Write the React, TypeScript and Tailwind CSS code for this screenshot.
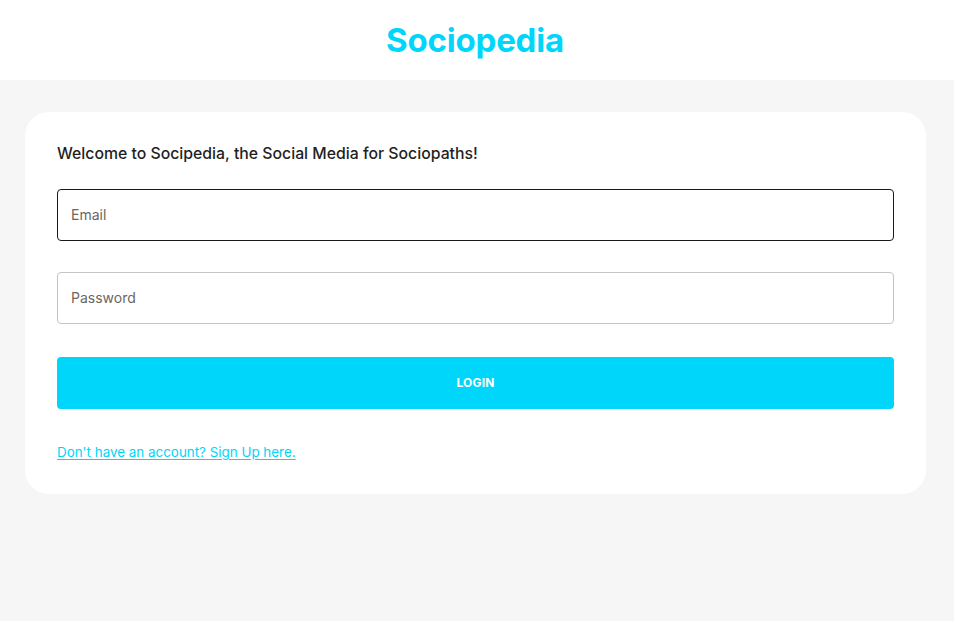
import React, { useState } from 'react';

const font = { fontFamily: 'Inter, "Open Sans", sans-serif' };

const App: React.FC = () => {
  const [email, setEmail] = useState('');
  const [password, setPassword] = useState('');

  return (
    <div className="min-h-[621px] bg-[#f6f6f6]" style={font}>
      <header className="flex h-[80px] items-center justify-center bg-white">
        <h1 className="ml-[-4px] text-[33px] font-bold leading-none tracking-[-0.2px] text-[#00d5fa]">
          Sociopedia
        </h1>
      </header>

      <div className="ml-[25px] mt-[32px] w-[901px] rounded-[24px] bg-white p-[32px]">
        <h2 className="text-[15.8px] font-medium leading-[20px] text-[#1f1f1f]">
          Welcome to Socipedia, the Social Media for Sociopaths!
        </h2>

        <form className="mt-[25px] flex flex-col" onSubmit={(e) => e.preventDefault()}>
          <input
            type="email"
            placeholder="Email"
            value={email}
            onChange={(e) => setEmail(e.target.value)}
            className="h-[52px] w-full rounded-[4px] border border-[#1a1a1a] px-[13px] pb-[2px] text-[14px] text-[#333] outline-none placeholder:text-[#6b6660]"
          />
          <input
            type="password"
            placeholder="Password"
            value={password}
            onChange={(e) => setPassword(e.target.value)}
            className="mt-[31px] h-[52px] w-full rounded-[4px] border border-[#c4c4c4] px-[13px] pb-[2px] text-[14px] text-[#333] outline-none placeholder:text-[#6b6660]"
          />
          <button
            type="submit"
            className="mt-[33px] h-[52px] w-full rounded-[4px] bg-[#00d5fa] text-[12px] font-bold tracking-[0.2px] text-white"
          >
            LOGIN
          </button>
        </form>

        <a
          href="#"
          className="mt-[33px] block w-fit text-[13.4px] leading-[20px] text-[#00d5fa] underline underline-offset-2"
        >
          Don't have an account? Sign Up here.
        </a>
      </div>
    </div>
  );
};

export default App;
